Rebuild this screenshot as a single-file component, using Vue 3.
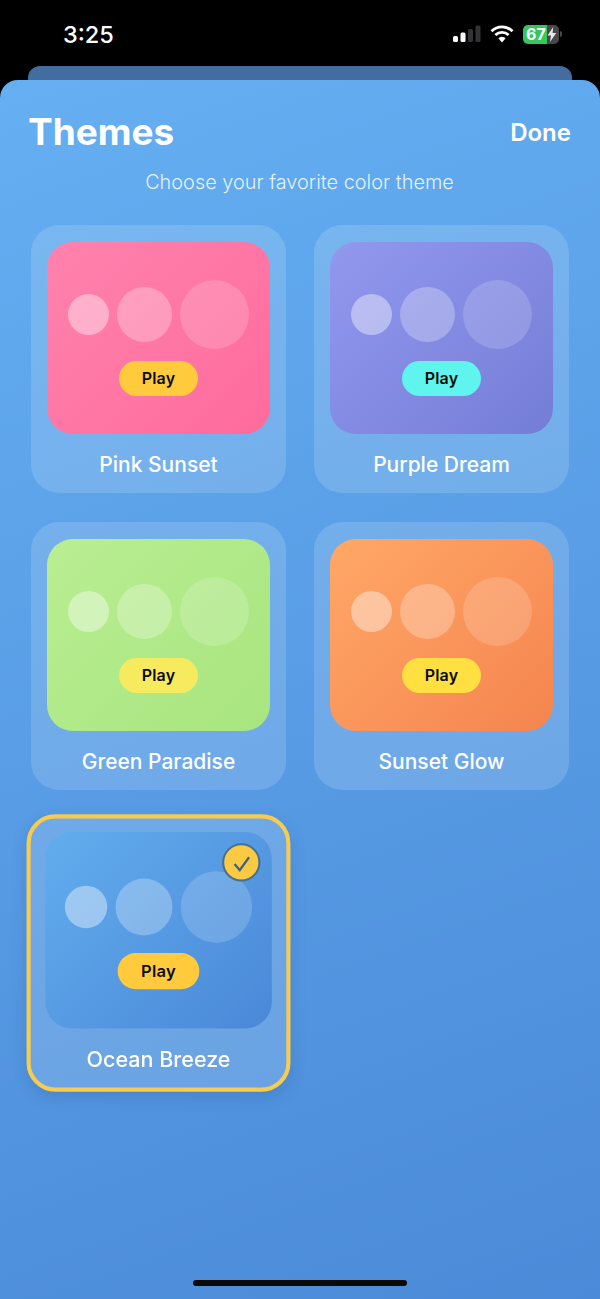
<script setup>
const themes = [
  { name: 'Pink Sunset', cls: 'pink' },
  { name: 'Purple Dream', cls: 'purple' },
  { name: 'Green Paradise', cls: 'green' },
  { name: 'Sunset Glow', cls: 'orange' },
  { name: 'Ocean Breeze', cls: 'ocean', selected: true },
]
</script>

<template>
  <div class="phone">
    <header class="status-bar">
      <span class="time">3:25</span>
      <div class="status-icons">
        <svg class="signal" width="28" height="18" viewBox="0 0 28 18">
          <rect x="0" y="11" width="5" height="6" rx="1.5" fill="#fff" />
          <rect x="7.5" y="7.5" width="5" height="9.5" rx="1.5" fill="#fff" />
          <rect x="15" y="4" width="5" height="13" rx="1.5" fill="#333335" />
          <rect x="22.5" y="0.5" width="5" height="16.5" rx="1.5" fill="#333335" />
        </svg>
        <svg class="wifi" width="24" height="18" viewBox="0 0 24 18">
          <path d="M1.5 6.2a15 15 0 0 1 21 0" fill="none" stroke="#fff" stroke-width="2.8" />
          <path d="M5.4 10a9.6 9.6 0 0 1 13.2 0" fill="none" stroke="#fff" stroke-width="2.8" />
          <path d="M8.4 13.2 12 17.4l3.6-4.2a5 5 0 0 0-7.2 0z" fill="#fff" />
        </svg>
        <div class="battery">
          <div class="battery-body">
            <span class="battery-level">67</span>
            <svg class="bolt" width="10" height="15" viewBox="0 0 10 15">
              <path d="M6.2 0 0.6 8.4h3.4L3 15l6.2-9H5.6z" fill="#e8e8e8" />
            </svg>
          </div>
          <span class="battery-nub" />
        </div>
      </div>
    </header>

    <div class="back-card" />

    <main class="sheet">
      <div class="sheet-head">
        <h1>Themes</h1>
        <span class="done">Done</span>
      </div>
      <p class="subtitle">Choose your favorite color theme</p>

      <section class="grid">
        <article
          v-for="theme in themes"
          :key="theme.name"
          class="card"
          :class="{ selected: theme.selected }"
        >
          <div class="preview" :class="theme.cls">
            <div class="dots">
              <span class="dot dot-s" />
              <span class="dot dot-m" />
              <span class="dot dot-l" />
            </div>
            <button class="play">Play</button>
            <span v-if="theme.selected" class="check">
              <svg width="20" height="20" viewBox="0 0 20 20">
                <path d="M3 11 8 17 17 4.5" fill="none" stroke="#3f6585" stroke-width="2.2" />
              </svg>
            </span>
          </div>
          <div class="label">{{ theme.name }}</div>
        </article>
      </section>

      <div class="home-bar" />
    </main>
  </div>
</template>

<style>
html,
body {
  margin: 0;
  background: #000;
}
</style>

<style scoped>
.phone {
  display: flex;
  flex-direction: column;
  width: 600px;
  height: 1299px;
  overflow: hidden;
  background: #000;
  font-family: Inter, 'Liberation Sans', sans-serif;
  color: #fff;
}

.status-bar {
  display: flex;
  align-items: center;
  justify-content: space-between;
  box-sizing: border-box;
  height: 66px;
  padding: 2px 38px 0 63px;
  flex-shrink: 0;
}

.time {
  font-size: 23.5px;
  font-weight: 500;
}

.status-icons {
  display: flex;
  align-items: center;
  gap: 9px;
}

.battery {
  display: flex;
  align-items: center;
  gap: 1px;
}

.battery-body {
  display: flex;
  align-items: center;
  box-sizing: border-box;
  width: 36px;
  height: 19px;
  padding-left: 3px;
  border-radius: 5px;
  background: linear-gradient(90deg, #34c759 0 68%, #48484a 68% 100%);
}

.battery-level {
  font-size: 16px;
  font-weight: 700;
  line-height: 19px;
}

.bolt {
  margin-left: 1px;
}

.battery-nub {
  width: 2px;
  height: 6px;
  border-radius: 0 2px 2px 0;
  background: #48484a;
}

.back-card {
  flex-shrink: 0;
  height: 14px;
  margin: 0 28px;
  border-radius: 12px 12px 0 0;
  background: #436da0;
}

.sheet {
  position: relative;
  flex: 1;
  box-sizing: border-box;
  padding: 30px 29px 0 28px;
  border-radius: 18px 18px 0 0;
  background: linear-gradient(160deg, #65aff2 0%, #4b8ad8 100%);
}

.sheet-head {
  display: flex;
  align-items: center;
  justify-content: space-between;
  height: 44px;
}

h1 {
  margin: 0;
  font-size: 37px;
  font-weight: 700;
  line-height: 44px;
}

.done {
  font-size: 24px;
  font-weight: 600;
}

.subtitle {
  margin: 16px 0 0;
  font-size: 19.9px;
  font-weight: 300;
  line-height: 24px;
  text-align: center;
  color: rgba(255, 255, 255, 0.85);
}

.grid {
  display: grid;
  grid-template-columns: 255px 255px;
  gap: 29px 28px;
  margin: 31px 0 0 3px;
}

.card {
  box-sizing: border-box;
  height: 268px;
  padding: 17px 16px 0;
  border-radius: 28px;
  background: rgba(255, 255, 255, 0.15);
}

.card.selected {
  transform: scale(1.035);
  border: 4px solid #f6cb4f;
  padding: 13px 14px 0;
  box-shadow: 0 6px 14px rgba(30, 70, 130, 0.18);
}

.preview {
  position: relative;
  display: flex;
  flex-direction: column;
  align-items: center;
  box-sizing: border-box;
  height: 192px;
  padding-top: 38px;
  border-radius: 26px;
}

.selected .preview {
  height: 190px;
}

.pink {
  background: linear-gradient(135deg, #ff82ad, #fe6b9c);
}

.purple {
  background: linear-gradient(135deg, #9298ee, #747dd6);
}

.green {
  background: linear-gradient(135deg, #b9ee92, #a8e57f);
}

.orange {
  background: linear-gradient(135deg, #ffa866, #f58450);
}

.ocean {
  background: linear-gradient(135deg, #62aded, #4a88d8);
}

.dots {
  display: flex;
  align-items: center;
  gap: 8px;
  height: 69px;
}

.dot {
  border-radius: 50%;
}

.dot-s {
  width: 41px;
  height: 41px;
  background: rgba(255, 255, 255, 0.4);
}

.dot-m {
  width: 55px;
  height: 55px;
  background: rgba(255, 255, 255, 0.27);
}

.dot-l {
  width: 69px;
  height: 69px;
  background: rgba(255, 255, 255, 0.17);
}

.play {
  width: 79px;
  height: 35px;
  margin-top: 12px;
  padding: 0 0 2px;
  border: 0;
  border-radius: 18px;
  background: #ffcb3d;
  color: #0b0b0b;
  font-family: inherit;
  font-size: 16px;
  font-weight: 600;
  letter-spacing: 0.2px;
}

.selected .play {
  margin-top: 10px;
}

.green .play {
  background: #f6ea5f;
}

.orange .play {
  background: #ffe040;
}

.purple .play {
  background: #5ff4ee;
}

.check {
  position: absolute;
  top: 11px;
  right: 11px;
  display: flex;
  align-items: center;
  justify-content: center;
  box-sizing: border-box;
  width: 37px;
  height: 37px;
  border: 2.5px solid #47708f;
  border-radius: 50%;
  background: #fbca43;
}

.label {
  margin-top: 19px;
  font-size: 21px;
  font-weight: 500;
  line-height: 24px;
  text-align: center;
}

.selected .label {
  margin-top: 18px;
  font-size: 20.8px;
}

.home-bar {
  position: absolute;
  bottom: 13px;
  left: 193px;
  width: 214px;
  height: 6px;
  border-radius: 3px;
  background: #0a0a0a;
}
</style>
